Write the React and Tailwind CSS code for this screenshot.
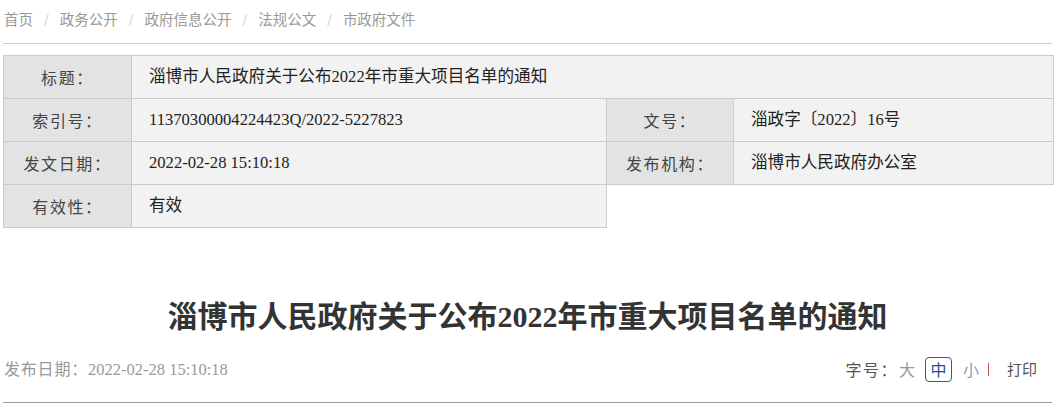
import React from "react";

const sans = { fontFamily: '"Noto Sans CJK SC", "Noto Sans", sans-serif' };
const valFont = { fontFamily: '"Liberation Serif", "Noto Sans CJK SC", serif' };

function Label({ children }) {
  return (
    <td className="border border-[#cccccc] bg-[#e3e3e3] text-center text-[16px] tracking-[1.6px] text-[#444] h-[43px] p-0" style={sans}>
      {children}
    </td>
  );
}
function Value({ children, colSpan }) {
  return (
    <td colSpan={colSpan} className="border border-[#cccccc] bg-[#f2f2f2] text-[16.6px] text-[#222] h-[43px] pl-[17px] p-0" style={valFont}>
      {children}
    </td>
  );
}

export default function App() {
  const crumbs = ["首页", "政务公开", "政府信息公开", "法规公文", "市政府文件"];
  return (
    <div className="w-[1054px] h-[417px] bg-white overflow-hidden">
      <div className="ml-[3px] w-[1049px]">
        <div className="h-[43px] flex items-center pl-[1px] pb-[6px] text-[14.5px] text-[#999]" style={sans}>
          {crumbs.map((c, i) => (
            <React.Fragment key={c}>
              {i > 0 && <span className="mx-[11px] text-[#c8c8c8] text-[12px]">/</span>}
              <span>{c}</span>
            </React.Fragment>
          ))}
        </div>
        <div className="h-[1px] bg-[#cccccc]" />
        <table className="mt-[11px] border-collapse table-fixed w-[1050px]">
          <colgroup>
            <col className="w-[128px]" />
            <col className="w-[475px]" />
            <col className="w-[127px]" />
            <col className="w-[320px]" />
          </colgroup>
          <tbody>
            <tr>
              <Label>标题：</Label>
              <Value colSpan={3}>淄博市人民政府关于公布2022年市重大项目名单的通知</Value>
            </tr>
            <tr>
              <Label>索引号：</Label>
              <Value>11370300004224423Q/2022-5227823</Value>
              <Label>文号：</Label>
              <Value>淄政字〔2022〕16号</Value>
            </tr>
            <tr>
              <Label>发文日期：</Label>
              <Value>2022-02-28 15:10:18</Value>
              <Label>发布机构：</Label>
              <Value>淄博市人民政府办公室</Value>
            </tr>
            <tr>
              <Label>有效性：</Label>
              <Value>有效</Value>
            </tr>
          </tbody>
        </table>
        <h1 className="mt-[69px] text-center text-[30px] font-bold text-[#333] leading-[40px]" style={{ fontFamily: '"Liberation Serif", "Noto Sans CJK SC", serif' }}>
          淄博市人民政府关于公布2022年市重大项目名单的通知
        </h1>
        <div className="mt-[13px] h-[38px] flex items-center justify-between">
          <div className="flex items-baseline text-[#999] pl-[1px]">
            <span className="text-[16px] tracking-[0.8px]" style={sans}>发布日期：</span>
            <span className="text-[16.5px]" style={{ fontFamily: '"Liberation Serif", serif' }}>2022-02-28 15:10:18</span>
          </div>
          <div className="flex items-center text-[16px] pr-[15px]" style={sans}>
            <span className="text-[#555] tracking-[1.5px]">字号：</span>
            <span className="text-[#999] ml-[1px]">大</span>
            <span className="ml-[10px] w-[27px] h-[25px] flex items-center justify-center border border-[#2a5ba8] rounded-[4px] text-[#1f4e9c]">中</span>
            <span className="text-[#999] ml-[11px]">小</span>
            <span className="ml-[9px] w-[1px] h-[13px] bg-[#d05050]" />
            <span className="ml-[18px] text-[#555] text-[15px]">打印</span>
          </div>
        </div>
        <div className="mt-[14px] h-[1px] bg-[#999] w-[1049px]" />
      </div>
    </div>
  );
}
